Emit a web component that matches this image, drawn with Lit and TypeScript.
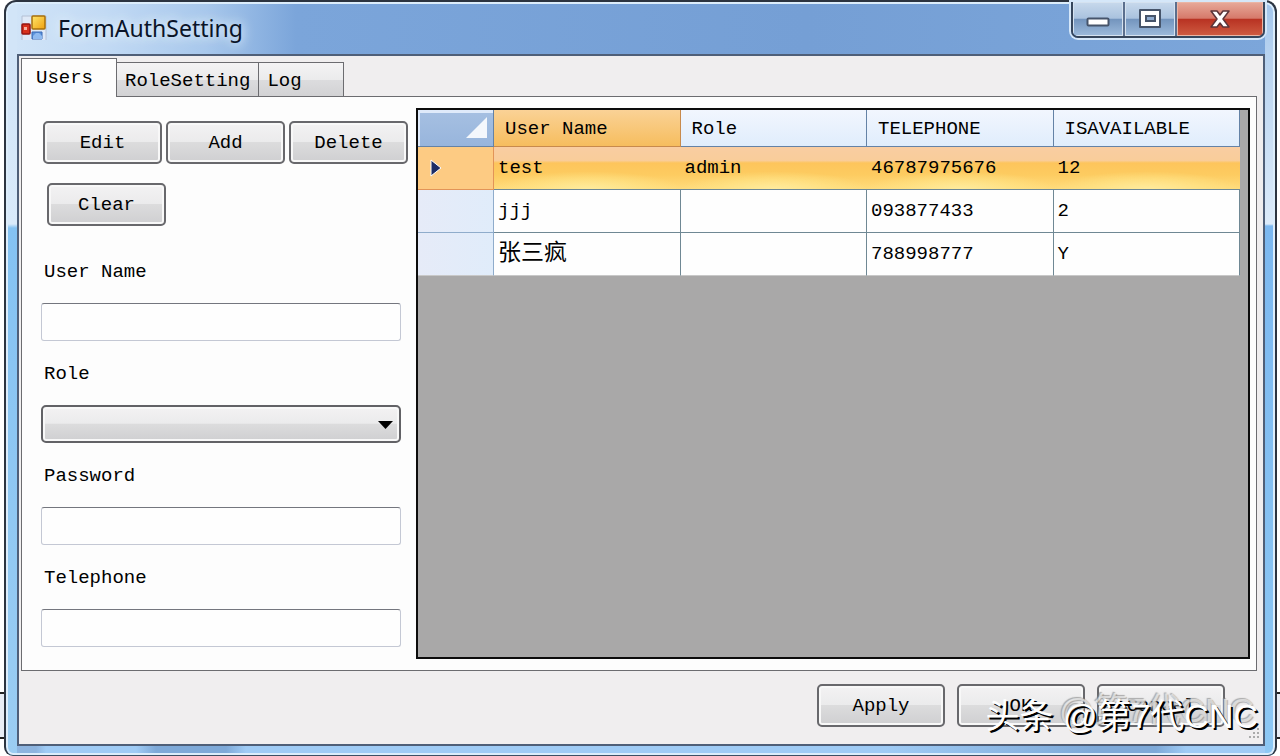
import { LitElement, html, css, svg } from "lit";
import { customElement, state } from "lit/decorators.js";

interface User {
  name: string;
  role: string;
  telephone: string;
  available: string;
}

const USERS: User[] = [
  { name: "test", role: "admin", telephone: "46787975676", available: "12" },
  { name: "jjj", role: "", telephone: "093877433", available: "2" },
  { name: "张三疯", role: "", telephone: "788998777", available: "Y" },
];

const TABS = ["Users", "RoleSetting", "Log"];

const appIcon = svg`
  <defs>
    <linearGradient id="gold" x1="0" y1="0" x2="1" y2="1">
      <stop offset="0" stop-color="#ffe66a" /><stop offset="1" stop-color="#f0a010" />
    </linearGradient>
  </defs>
  <path d="M1 25V1h24v24" fill="#dfe9f7" stroke="#b4c0d4" />
  <rect x="11" y="1" width="13" height="13" rx="1" fill="url(#gold)" stroke="#a8700c" stroke-width="1.5" />
  <rect x="1" y="9" width="8" height="10" rx="1" fill="#d8301c" stroke="#951410" stroke-width="1.5" />
  <rect x="3" y="12" width="3" height="3" fill="#f6b0a0" />
  <path d="M11 17h10v7H11z" fill="#5c94dc" stroke="#3868b4" />
  <path d="M12 21l3-3h3l3 3v3h-9z" fill="#8fbaf0" />
`;

@customElement("app-root")
export class AppRoot extends LitElement {
  @state() private tab = "Users";
  @state() private selected = 0;

  static styles = css`
    :host {
      display: block;
      box-sizing: border-box;
      height: 100vh;
      min-height: 700px;
      padding: 0 3px 0 4px;
      overflow: hidden;
      position: relative;
      background: linear-gradient(#fff 0 692px, #222 692px 694px, #e8edf5 694px 737px, #222 737px 739px, #fff 739px);
      font: 19px/22px "Liberation Mono", "Noto Sans CJK SC", monospace;
      color: #000;
    }
    * { box-sizing: border-box; }
    button, input, select { font: inherit; color: inherit; margin: 0; }
    .window {
      height: 100%;
      display: flex;
      flex-direction: column;
      padding: 0 10px 9px 11px;
      border: 2px solid #2c3440;
      border-bottom: 1px solid #3c5064;
      border-radius: 12px 12px 9px 9px;
      box-shadow: inset 0 0 0 2px #dcedfb;
      background:
        linear-gradient(#d2e5f8 54px, #d9eafa 222px, #84c2f2 226px, #9bcdf2) left / 11px 100% no-repeat,
        linear-gradient(#a4c6ec 4px, #b8d3f0 54px, #dcebfa 222px, #7cb8f0 224px, #8dc8f4) right / 10px 100% no-repeat,
        linear-gradient(90deg, #8db4df 30px, #9fcbf5 40px 130px, #7ea9d8 150px 220px, #9fcbf5 240px 320px, #9fcbf5 880px, #7ea9d8 1090px 1150px, #9fcbf5 1180px) bottom / 100% 12px no-repeat,
        linear-gradient(90deg, #d2e5f8, #c2daf4 100px, #a8c8ec 200px, #7ba5da 290px, #759fd5 800px, #7ca6da);
    }
    .titlebar {
      flex: 0 0 52px;
      display: flex;
      align-items: flex-start;
      justify-content: space-between;
    }
    .brand { display: flex; align-items: center; gap: 11px; height: 52px; padding-left: 4px; }
    .title {
      margin: 0;
      font: 23px/32px "Noto Sans", "Open Sans", sans-serif;
      color: #0a1428;
      text-shadow: 0 0 10px #e4f0fc, 0 0 14px #e4f0fc;
    }
    .caption {
      display: flex;
      height: 36px;
      border: 2px solid #36465c;
      border-top: 0;
      border-radius: 0 0 7px 7px;
      box-shadow: 0 0 0 2px #d5e7f9;
      overflow: hidden;
    }
    .cap {
      width: 52px;
      padding: 0;
      border: 0;
      border-right: 2px solid #5b6f8e;
      background: linear-gradient(#c8d9ec, #a9c2de 48%, #7394bd 50%, #9dbbdc);
      box-shadow: inset 0 0 0 1px #d5e2f0;
      display: flex;
      align-items: center;
      justify-content: center;
    }
    .cap.close {
      width: 86px;
      border-right: 0;
      background: linear-gradient(#e7aa9b, #d6796a 48%, #b83222 50%, #cf5c42);
      box-shadow: inset 0 0 0 1px #eab5a5;
    }
    .client {
      flex: 1;
      min-height: 0;
      display: flex;
      flex-direction: column;
      border: 2px solid #4f5f78;
      background: #f0eeef;
      padding: 2px 6px 0 2px;
    }
    .tabs { display: flex; align-items: flex-end; height: 38px; flex: none; }
    .tab {
      height: 34px;
      padding: 2px 8px 0;
      text-align: left;
      border: 1px solid #6c6c70;
      border-bottom: 0;
      border-left: 0;
      background: linear-gradient(#f4f3f4, #ebebec 50%, #dcdcde 52%, #d2d2d4);
      min-width: 85px;
    }
    .tab.active {
      height: 39px;
      min-width: 96px;
      padding: 0 14px;
      margin-bottom: -1px;
      border-left: 1px solid #6c6c70;
      background: #fdfdfd;
      position: relative;
      z-index: 1;
    }
    .page {
      flex: 1;
      min-height: 0;
      display: flex;
      gap: 8px;
      border: 1px solid #6c6c70;
      background: #fdfdfd;
      padding: 11px 6px 11px 19px;
    }
    .side { flex: 0 0 367px; padding-top: 13px; }
    .actions { display: flex; flex-wrap: wrap; gap: 19px 4px; padding-left: 2px; }
    .btn {
      height: 43px;
      width: 119px;
      padding: 0;
      border: 2px solid #68686c;
      border-radius: 5px;
      background: linear-gradient(#f3f2f3, #ebebec 48%, #dcdcdd 50%, #cfcfd1);
      box-shadow: inset 0 0 0 2px #f8f8f8;
    }
    .btn.clear { margin-left: 4px; }
    .fields { display: grid; gap: 22px; width: 360px; padding-top: 35px; }
    .field { display: grid; gap: 20px; }
    .field label { padding-left: 3px; }
    .box {
      width: 100%;
      height: 38px;
      padding: 0 6px;
      border: 1px solid #c4c8d4;
      border-top-color: #74767e;
      border-radius: 3px;
      background: #fefefe;
    }
    .pick { position: relative; display: grid; }
    .combo {
      appearance: none;
      border: 2px solid #626266;
      border-radius: 5px;
      background: linear-gradient(#f3f2f3, #ebebec 48%, #dcdcdd 50%, #cfcfd1);
      box-shadow: inset 0 0 0 2px #f8f8f8;
    }
    .arrow { position: absolute; right: 8px; top: 16px; pointer-events: none; }
    .gridview {
      flex: 1;
      min-width: 0;
      border: 2px solid #0c0c0c;
      background: #a9a8a8;
      padding-right: 8px;
    }
    .data { width: 100%; table-layout: fixed; border-spacing: 0; }
    .data th, .data td { padding: 0 4px; text-align: left; font-weight: normal; border: solid #6f8894; border-width: 0 1px 1px 0; white-space: nowrap; overflow: hidden; }
    .data thead th { height: 37px; padding: 2px 11px 0; border-color: #6482a6; background: linear-gradient(#f2f6fe, #e0edfc); }
    .data thead th.corner { width: 76px; padding: 0 6px; text-align: right; background: linear-gradient(#a6c0e2, #98b5dc); box-shadow: inset 2px 3px #dfeafa; }
    .data thead th.sorted { background: linear-gradient(#fad296, #f6bd5e); border-color: #c88a4c; }
    .data td, .data tbody th { height: 43px; background: #fefefe; }
    .data tbody th { background: linear-gradient(90deg, #e6ebf8, #e0ecfa); padding-left: 12px; border-color: #8faccb; }
    .data tbody tr:last-child > * { border-bottom-color: #c8c8c8; }
    .data tbody tr.on th { background: #fdcb83; border-color: #e29458; }
    .data tbody tr.on td {
      border-right: 0;
      background:
        radial-gradient(ellipse 50% 42% at 50% 100%, #ffeb9c, #ffe68a88 60%, #ffe68a00),
        linear-gradient(#f9cda2, #f9cd9a 32%, #fdc55c 38%, #fdcb60 65%, #ffdc7c);
    }
    .data td:lang(zh) { font-size: 23px; }
    .data svg { display: inline-block; vertical-align: middle; }
    .footer {
      flex: 0 0 73px;
      display: flex;
      justify-content: flex-end;
      gap: 12px;
      padding: 13px 32px 0 0;
    }
    .footer .btn { width: 128px; }
    .grip { position: absolute; right: 20px; bottom: 16px; }
    .mark {
      position: absolute;
      right: 22px;
      bottom: 20px;
      font: 34px/40px "Liberation Sans", "Noto Sans CJK SC", sans-serif;
      color: #fff;
      text-shadow: 2px 2px 0 #000;
      white-space: nowrap;
      pointer-events: none;
    }
    .mark.ghost { bottom: 26px; right: 26px; color: #f4f4f4aa; text-shadow: 1px 1px 1px #888a, -1px -1px 1px #888a; }
  `;

  private textField(id: string, label: string, type = "text") {
    return html`<div class="field">
      <label for=${id}>${label}</label>
      <input class="box" id=${id} type=${type} autocomplete="off" />
    </div>`;
  }

  render() {
    return html`
      <main class="window">
        <header class="titlebar">
          <div class="brand">
            <svg width="26" height="26" viewBox="0 0 26 26" aria-hidden="true">${appIcon}</svg>
            <h1 class="title">FormAuthSetting</h1>
          </div>
          <div class="caption">
            <button class="cap" aria-label="Minimize">
              <svg width="24" height="24" viewBox="0 0 24 24"><rect x="1.5" y="11.5" width="21" height="7" rx="1" fill="#fff" stroke="#46546a" stroke-width="2" /></svg>
            </button>
            <button class="cap" aria-label="Maximize">
              <svg width="24" height="22" viewBox="0 0 24 22"><path d="M2 2h20v17H2z" fill="#fff" stroke="#46546a" stroke-width="2" stroke-linejoin="round" /><path d="M8 8h9v5H8z" fill="#8eabd0" stroke="#46546a" stroke-width="2" /></svg>
            </button>
            <button class="cap close" aria-label="Close">
              <svg width="22" height="20" viewBox="0 0 22 20"><path d="M2 2h6l3 4 3-4h6l-6 8 6 8h-6l-3-4-3 4H2l6-8z" fill="#fff" stroke="#5c3438" stroke-width="1.5" stroke-linejoin="round" /></svg>
            </button>
          </div>
        </header>
        <section class="client">
          <div class="tabs" role="tablist">
            ${TABS.map(
              (t) => html`<button class="tab ${t === this.tab ? "active" : ""}" role="tab"
                aria-selected=${t === this.tab} @click=${() => (this.tab = t)}>${t}</button>`
            )}
          </div>
          <div class="page" role="tabpanel">
            <div class="side">
              <div class="actions">
                <button class="btn">Edit</button>
                <button class="btn">Add</button>
                <button class="btn">Delete</button>
                <button class="btn clear">Clear</button>
              </div>
              <form class="fields">
                ${this.textField("user", "User Name")}
                <div class="field">
                  <label for="role">Role</label>
                  <div class="pick">
                    <select class="box combo" id="role">
                      <option value=""></option>
                    </select>
                    <svg class="arrow" width="15" height="9" viewBox="0 0 15 9" aria-hidden="true"><path d="M0 0h15L7.5 8z" /></svg>
                  </div>
                </div>
                ${this.textField("pass", "Password", "password")}
                ${this.textField("phone", "Telephone")}
              </form>
            </div>
            <div class="gridview">
              <table class="data">
                <thead>
                  <tr>
                    <th class="corner"><svg width="21" height="21" viewBox="0 0 21 21"><path d="M21 0v21H0z" fill="#f4f7fc" /></svg></th>
                    <th class="sorted" scope="col">User Name</th>
                    <th scope="col">Role</th>
                    <th scope="col">TELEPHONE</th>
                    <th scope="col">ISAVAILABLE</th>
                  </tr>
                </thead>
                <tbody>
                  ${USERS.map(
                    (u, i) => html`<tr class=${i === this.selected ? "on" : ""} @click=${() => (this.selected = i)}>
                      <th scope="row">
                        ${i === this.selected
                          ? html`<svg width="12" height="18" viewBox="0 0 12 18"><path d="M1 1l10 8-10 8z" fill="#1c2c66" stroke="#fff" stroke-width="1" /></svg>`
                          : ""}
                      </th>
                      <td lang=${/[\u4e00-\u9fff]/.test(u.name) ? "zh" : "en"}>${u.name}</td>
                      <td>${u.role}</td>
                      <td>${u.telephone}</td>
                      <td>${u.available}</td>
                    </tr>`
                  )}
                </tbody>
              </table>
            </div>
          </div>
          <footer class="footer">
            <button class="btn">Apply</button>
            <button class="btn">OK</button>
            <button class="btn">Cancel</button>
          </footer>
        </section>
      </main>
      <svg class="grip" width="12" height="12" viewBox="0 0 12 12" fill="#aaa" aria-hidden="true">
        <path d="M9 0h2v2H9zM9 4h2v2H9zM5 4h2v2H5zM9 8h2v2H9zM5 8h2v2H5zM1 8h2v2H1z" />
      </svg>
      <div class="mark ghost" aria-hidden="true">@第7代CNC</div>
      <div class="mark">头条 @第7代CNC</div>
    `;
  }
}
